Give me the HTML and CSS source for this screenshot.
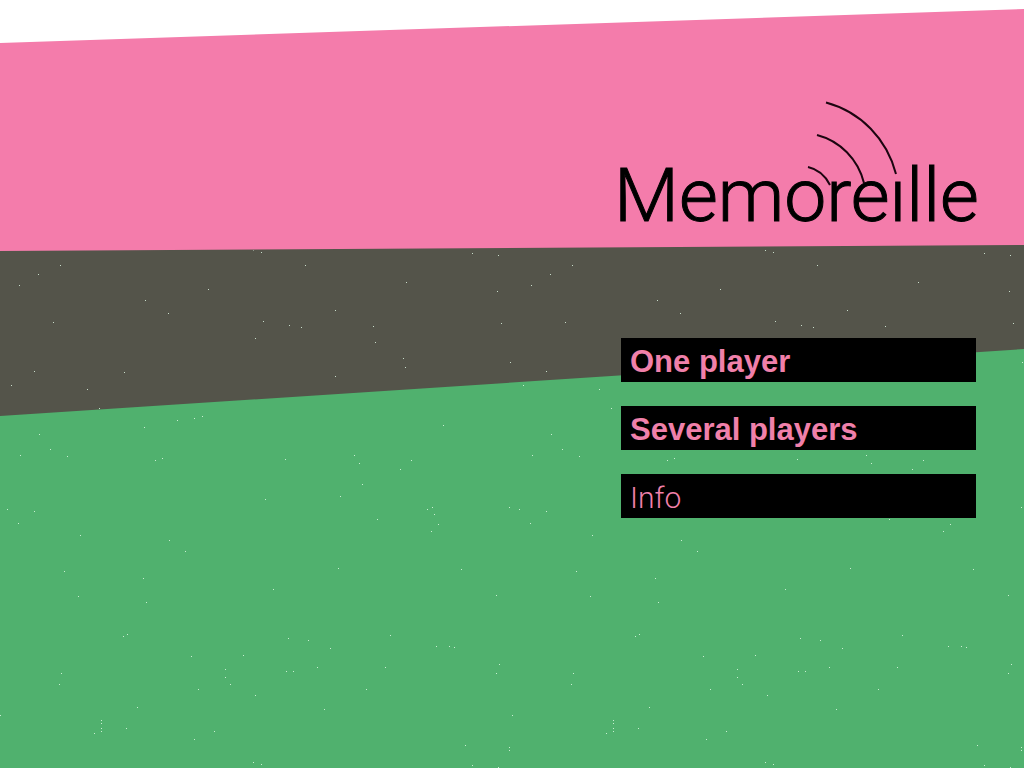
FILE: index.html
```html
<!DOCTYPE html>
<html lang="en">
<head>
<meta charset="utf-8">
<meta name="viewport" content="width=device-width, initial-scale=1">
<title>Memoreille</title>
<link rel="stylesheet" href="styles.css">
</head>
<body>
<main class="screen">
  <svg class="backdrop" viewBox="0 0 1024 768" preserveAspectRatio="xMidYMid slice" aria-hidden="true">
    <defs>
      <pattern id="specks" x="0" y="252" width="512" height="512" patternUnits="userSpaceOnUse">
        <path class="speck" transform="translate(0 -251.5)" d="M253 762h1M261 252h1M472 253h1M498 255h1M60 265h1M38 274h1M19 285h1M305 265h1M406 282h1M497 291h1M145 300h1M208 289h1M168 313h1M335 310h1M53 322h1M263 321h1M289 325h1M301 327h1M373 326h1M501 323h1M255 338h1M375 342h1M403 358h1M405 367h1M510 362h1M34 371h1M124 372h1M335 376h1M11 385h1M87 389h1M99 408h1M177 420h1M194 418h1M202 416h1M144 427h1M39 434h1M443 425h1M20 455h1M50 449h1M67 456h1M155 460h1M162 458h1M285 459h1M354 455h1M359 463h1M411 460h1M400 469h1M362 484h1M265 499h1M340 496h1M7 509h1M34 511h1M18 523h1M438 524h1M431 531h1M509 507h1M377 519h1M80 535h1M169 540h1M185 551h1M64 571h1M338 568h1M461 569h1M143 578h1M273 589h1M78 596h1M146 602h1M496 595h1M123 636h1M127 634h1M288 638h1M308 640h1M330 648h1M390 635h1M436 646h1M449 646h1M454 647h1M191 656h1M243 655h1M225 669h1M225 677h1M230 684h1M286 671h1M293 671h1M317 667h1M385 667h1M499 664h1M496 673h1M61 673h1M59 684h1M198 689h1M255 695h1M366 689h1M137 707h1M324 709h1M0 715h1M101 720h1M101 723h1M101 728h1M101 731h1M94 733h1M126 728h1M214 731h1M194 739h1M465 745h1M509 747h1M509 750h1"/>
      </pattern>
    </defs>
    <path class="band-pink" d="M0 43L1024 9V300H0Z"/>
    <path class="band-grey" d="M0 251L1024 245V500H0Z"/>
    <path class="band-green" d="M0 416L1024 349V768H0Z"/>
    <path fill="url(#specks)" d="M0 252L1024 246V768H0Z"/>
    <path class="speck" transform="translate(0 .5)" d="M427 509h1M432 507h1M434 514h1"/>
  </svg>

  <header class="brand">
    <h1 class="brand-name" aria-label="Memoreille">Memoreılle</h1>
    <svg class="brand-waves" viewBox="0 0 92 86" aria-hidden="true">
      <path d="M1 67C10 69 18 75 23 85"/>
      <path d="M10 35C33 41 51 59 57 83"/>
      <path d="M19 2.500C54 12 80 39 89 74"/>
    </svg>
  </header>

  <nav class="menu" aria-label="Main menu">
    <button class="menu-item" type="button">One player</button>
    <button class="menu-item" type="button">Several players</button>
    <button class="menu-item menu-item-light" type="button">Info</button>
  </nav>
</main>
</body>
</html>
```
FILE: styles.css
```css
* {
  box-sizing: border-box;
}

body {
  margin: 0;
  background: #fff;
}

.screen {
  position: relative;
  display: flex;
  flex-direction: column;
  align-items: flex-end;
  gap: 98px;
  min-height: 100vh;
  padding: 150px 48px 48px;
  overflow: hidden;
}

.backdrop {
  position: absolute;
  inset: 0;
  width: 100%;
  height: 100%;
}

.band-pink { fill: #f47cab; }
.band-grey { fill: #54544a; }
.band-green { fill: #50b16e; }

.speck {
  fill: none;
  stroke: #e6ffea;
  stroke-width: 1;
  opacity: 0.8;
}

.brand {
  position: relative;
  width: 362px;
  max-width: 100%;
}

.brand-name {
  margin: 0;
  color: #000;
  font: 300 75px/90px Roboto, "Liberation Sans", sans-serif;
  -webkit-text-stroke: 1px #000;
  white-space: nowrap;
}

.brand-waves {
  position: absolute;
  top: -50px;
  right: 77px;
  width: 92px;
  height: 86px;
  fill: none;
  stroke: #1c0510;
  stroke-width: 2;
}

.menu {
  position: relative;
  display: flex;
  flex-direction: column;
  gap: 24px;
  width: 355px;
  max-width: 100%;
}

.menu-item {
  height: 44px;
  padding: 4px 9px 0;
  border: 0;
  background: #000;
  color: #f080aa;
  font: 700 31px/40px "Liberation Sans", Arial, sans-serif;
  text-align: left;
  cursor: pointer;
}

.menu-item-light {
  font-family: Roboto, "Liberation Sans", sans-serif;
  font-size: 30px;
  font-weight: 300;
}
```
